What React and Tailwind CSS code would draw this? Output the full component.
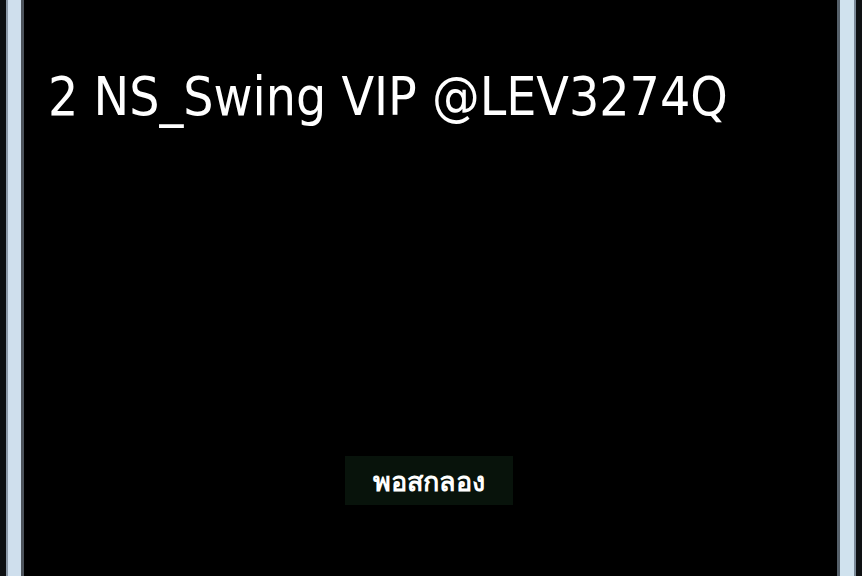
import React from "react";

export default function App() {
  return (
    <div className="flex h-[576px] w-[862px] bg-black overflow-hidden">
      {/* left frame edge */}
      <div className="flex shrink-0">
        <div className="w-[6px] bg-[#0e1012]" />
        <div className="w-[2px] bg-[#8d9baa]" />
        <div className="w-[13px] bg-[#cfdfed]" />
        <div className="w-[3px] bg-[#4d545c]" />
      </div>

      <div className="flex flex-1 flex-col bg-black">
        <h1
          className="pl-[24px] pt-[65px] text-[53px] leading-[64px] text-white whitespace-nowrap"
          style={{ fontFamily: '"DejaVu Sans Condensed", "DejaVu Sans", sans-serif' }}
        >
          2 NS_Swing VIP @LEV3274Q
        </h1>
        <div className="flex flex-1 items-end justify-center pb-[71px] pr-[3px]">
          <button
            type="button"
            className="flex h-[49px] w-[168px] items-center justify-center bg-[#08130b] text-[27px] font-bold leading-none text-white"
            style={{ fontFamily: '"Noto Sans", "DejaVu Sans", sans-serif' }}
          >
            พอสกลอง
          </button>
        </div>
      </div>

      {/* right frame edge */}
      <div className="flex shrink-0">
        <div className="w-[3px] bg-[#55606a]" />
        <div className="w-[14px] bg-[#d0e2ee]" />
        <div className="w-[2px] bg-[#7b8a98]" />
        <div className="w-[6px] bg-[#0e1012]" />
      </div>
    </div>
  );
}
